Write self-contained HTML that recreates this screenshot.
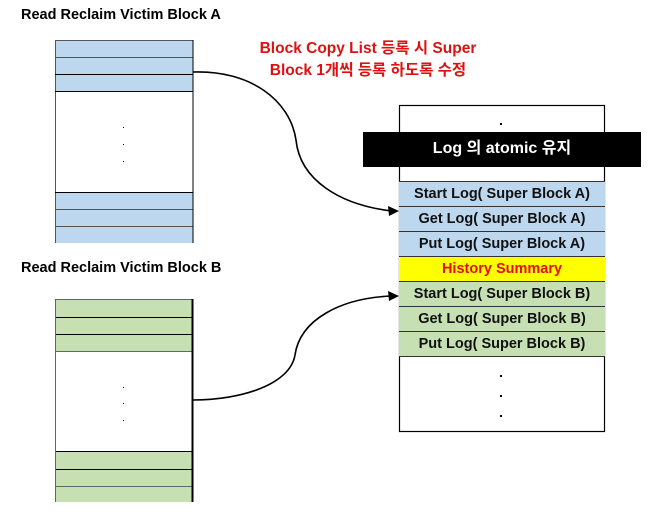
<!DOCTYPE html>
<html><head><meta charset="utf-8"><style>
body{margin:0;width:668px;height:513px;background:#fff;position:relative;overflow:hidden;font-family:"Liberation Sans","Noto Sans CJK KR",sans-serif;}
.t{position:absolute;font-weight:bold;font-size:14.5px;color:#000;white-space:nowrap}
.row{position:absolute;left:399px;width:206px;height:25px;box-sizing:border-box;border-top:1px solid #333;text-align:center;line-height:24px;font-weight:bold;font-size:14.5px;color:#111;white-space:nowrap}
</style></head><body>
<div class="t" style="left:21px;top:7px">Read Reclaim Victim Block A</div>
<div class="t" style="left:21px;top:260px">Read Reclaim Victim Block B</div>
<div style="position:absolute;left:218px;width:300px;top:38px;text-align:center;color:#e01010;font-weight:bold;font-size:15.5px;line-height:22px">Block Copy List 등록 시 Super<br>Block 1개씩 등록 하도록 수정</div>
<svg width="668" height="513" style="position:absolute;left:0;top:0">
<rect x="55" y="40" width="138" height="51" fill="#bdd7ee"/>
<rect x="55" y="192" width="138" height="51" fill="#bdd7ee"/>
<g stroke="#555" stroke-width="1"><line x1="55" y1="40.5" x2="193" y2="40.5"/><line x1="55" y1="57.5" x2="193" y2="57.5"/><line x1="55" y1="226.5" x2="193" y2="226.5"/><line x1="55" y1="209.5" x2="193" y2="209.5"/><line x1="55.5" y1="40" x2="55.5" y2="243"/></g>
<g stroke="#000" stroke-width="1"><line x1="55" y1="74.5" x2="193" y2="74.5"/><line x1="55" y1="91.5" x2="193" y2="91.5"/><line x1="55" y1="192.5" x2="193" y2="192.5"/><line x1="193" y1="40" x2="193" y2="243"/></g>
<rect x="123" y="127" width="1" height="1" fill="#000"/><rect x="123" y="144" width="1" height="1" fill="#000"/><rect x="123" y="161" width="1" height="1" fill="#000"/>
<rect x="55" y="299" width="138" height="52" fill="#c6e0b4"/>
<rect x="55" y="451" width="138" height="51" fill="#c6e0b4"/>
<g stroke="#000" stroke-width="1"><line x1="55" y1="317.5" x2="193" y2="317.5"/><line x1="55" y1="334.5" x2="193" y2="334.5"/><line x1="55" y1="451.5" x2="193" y2="451.5"/><line x1="55" y1="469.5" x2="193" y2="469.5"/></g>
<g stroke="#666" stroke-width="1"><line x1="55" y1="299.5" x2="193" y2="299.5"/><line x1="55" y1="351.5" x2="193" y2="351.5"/><line x1="55" y1="486.5" x2="193" y2="486.5"/><line x1="55.5" y1="299" x2="55.5" y2="502"/></g>
<line x1="192.5" y1="299" x2="192.5" y2="502" stroke="#000" stroke-width="2"/>
<rect x="123" y="387" width="1" height="1" fill="#000"/><rect x="123" y="403" width="1" height="1" fill="#000"/><rect x="123" y="420" width="1" height="1" fill="#000"/>
<path d="M193 72 C250 70 290 100 296 140 C300 180 340 205 392 211" fill="none" stroke="#000" stroke-width="1.6"/>
<polygon points="399,211 388,206 389,216" fill="#000"/>
<path d="M193 400 C240 400 290 385 295 355 C300 320 340 298 392 296" fill="none" stroke="#000" stroke-width="1.6"/>
<polygon points="399,296 388,291 389,301" fill="#000"/>
<rect x="399.5" y="105.5" width="205" height="326" fill="#fff" stroke="#000" stroke-width="1.2"/>
<rect x="500" y="123" width="2" height="2" fill="#000"/>
<rect x="500" y="375" width="2" height="2" fill="#000"/><rect x="500" y="395" width="2" height="2" fill="#000"/><rect x="500" y="415" width="2" height="2" fill="#000"/>
</svg>
<div class="row" style="top:181px;background:#bdd7ee">Start Log( Super Block A)</div>
<div class="row" style="top:206px;background:#bdd7ee">Get Log( Super Block A)</div>
<div class="row" style="top:231px;background:#bdd7ee">Put Log( Super Block A)</div>
<div class="row" style="top:256px;background:#ffff00;color:#e01010">History Summary</div>
<div class="row" style="top:281px;background:#c6e0b4">Start Log( Super Block B)</div>
<div class="row" style="top:306px;background:#c6e0b4">Get Log( Super Block B)</div>
<div class="row" style="top:331px;background:#c6e0b4;border-bottom:1px solid #333;height:26px">Put Log( Super Block B)</div>
<div style="position:absolute;left:363px;top:132px;width:278px;height:35px;background:#000;color:#fff;font-weight:bold;font-size:16px;text-align:center;line-height:34px">Log 의 atomic 유지</div>
</body></html>
